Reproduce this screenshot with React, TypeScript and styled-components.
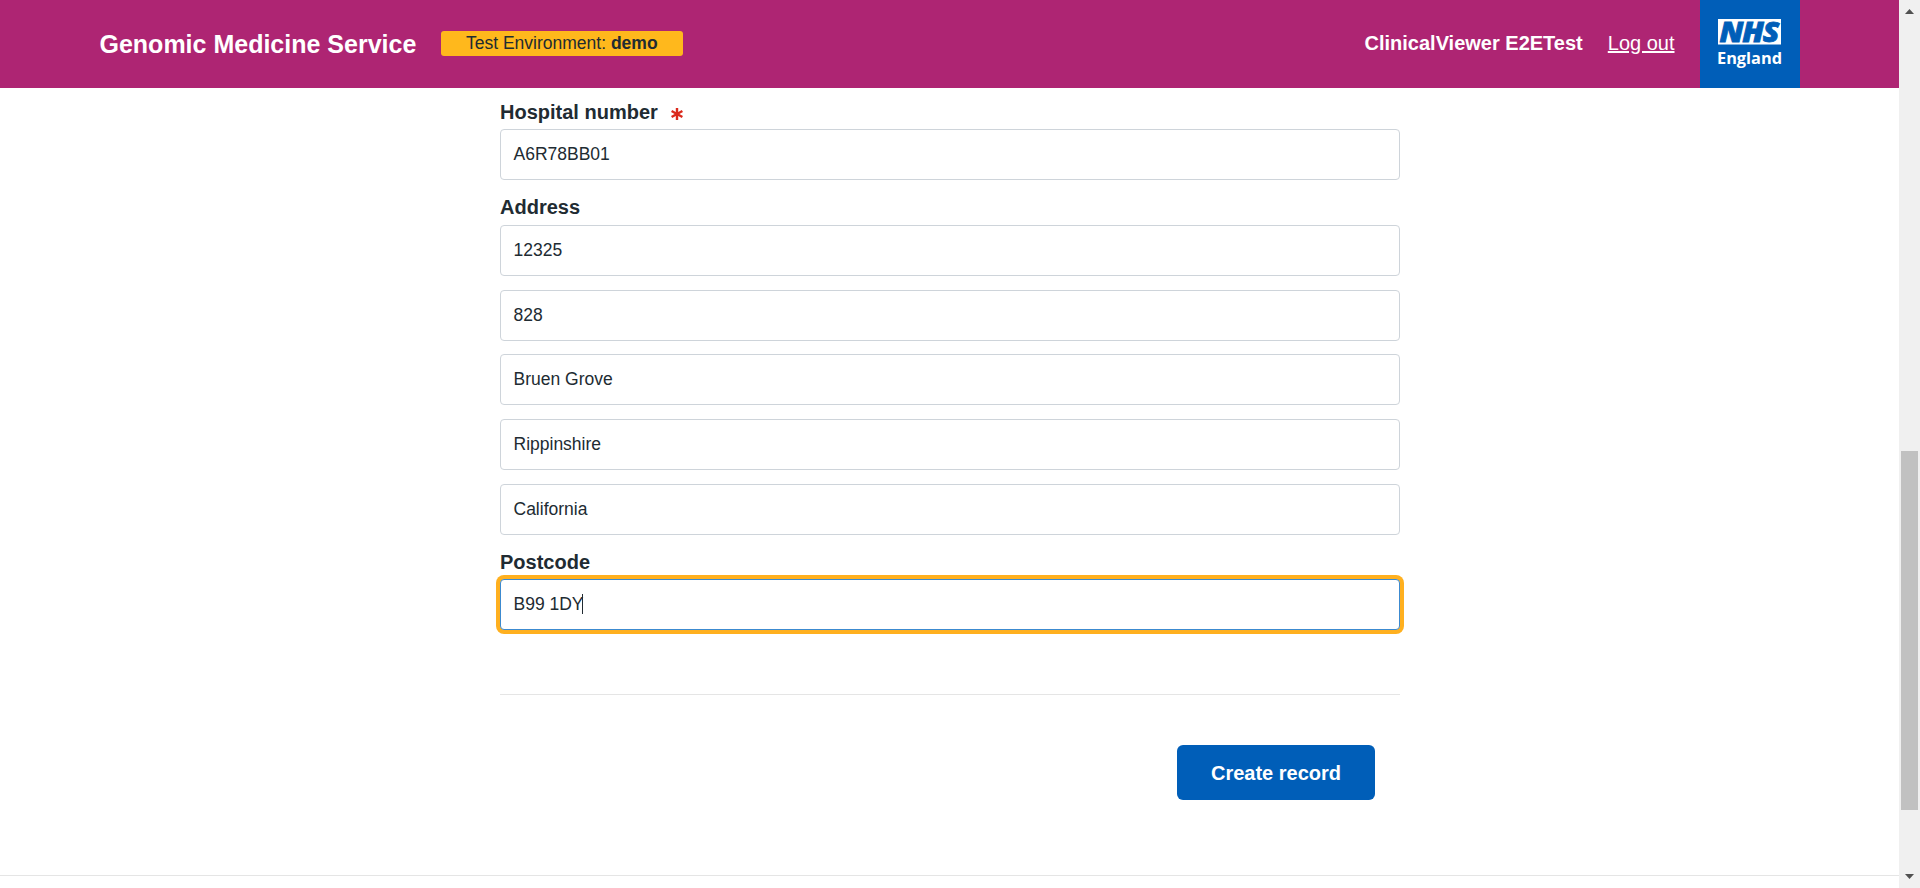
import React from "react";
import styled, { createGlobalStyle, css } from "styled-components";

const Global = createGlobalStyle`
  * { box-sizing: border-box; }
  html, body { margin: 0; padding: 0; overflow: hidden; background: #fff; }
  body { font-family: "Liberation Sans", Arial, sans-serif; color: #212b32; }
`;

const Viewport = styled.div`
  display: flex;
  width: 1920px;
  height: 888px;
  overflow: hidden;
`;

const Page = styled.div`
  flex: 1;
  display: flex;
  flex-direction: column;
  height: 100%;
  background: #fff;
`;

const Header = styled.header`
  display: flex;
  align-items: center;
  height: 88px;
  flex: none;
  padding: 0 99px 0 99.5px;
  background: #ae2573;
  color: #fff;
`;

const Title = styled.h1`
  margin: 0;
  font-size: 25px;
  line-height: 30px;
  font-weight: 700;
  white-space: nowrap;
`;

const EnvBadge = styled.div`
  width: 242px;
  height: 25px;
  margin: 0 0 1px 24.5px;
  border-radius: 3px;
  background: #ffb81c;
  color: #212b32;
  font-size: 17.5px;
  line-height: 24px;
  text-align: center;
  white-space: nowrap;
`;

const UserName = styled.span`
  margin-left: auto;
  font-size: 20px;
  line-height: 30px;
  font-weight: 700;
  white-space: nowrap;
  padding-bottom: 2px;
`;

const LogOut = styled.a`
  margin: 0 25.5px 0 25px;
  font-size: 20px;
  line-height: 30px;
  color: #fff;
  text-decoration: underline;
  text-decoration-thickness: 2px;
  white-space: nowrap;
  padding-bottom: 2px;
`;

const LogoPanel = styled.div`
  width: 100px;
  height: 88px;
  background: #005eb8;
`;

const Form = styled.main`
  width: 900px;
  flex: 1;
  margin-left: 500px;
  display: flex;
  flex-direction: column;
`;

const Group = styled.section<{ $top: number }>`
  display: flex;
  flex-direction: column;
  padding-top: ${(p) => p.$top}px;
`;

const Label = styled.label<{ $gap?: number }>`
  height: 30px;
  margin-bottom: ${(p) => p.$gap ?? 2}px;
  font-size: 20px;
  line-height: 30px;
  font-weight: 700;
`;

const Required = styled.svg`
  width: 12px;
  height: 12px;
  margin-left: 13.5px;
  vertical-align: -1px;
`;

const Fields = styled.div`
  display: flex;
  flex-direction: column;
  gap: 13.7px;
`;

const Field = styled.div<{ $focused?: boolean }>`
  display: flex;
  align-items: center;
  height: 51px;
  padding: 0 12.5px;
  border: 1px solid #ced4da;
  border-radius: 4px;
  background: #fff;
  font-size: 17.5px;
  ${(p) =>
    p.$focused &&
    css`
      border-color: #3c8ad0;
      box-shadow: 0 0 0 4px #ffb01f;
    `}
`;

const Caret = styled.span`
  width: 1px;
  height: 20px;
  margin-left: -2px;
  background: #212b32;
`;

const Divider = styled.hr`
  width: 100%;
  height: 1px;
  margin: 64px 0 50px;
  border: 0;
  background: #e5e5e5;
`;

const SubmitButton = styled.button`
  align-self: flex-end;
  width: 198px;
  height: 55px;
  margin-right: 25px;
  padding: 2px 0 0;
  border: 0;
  border-radius: 6px;
  background: #005eb8;
  color: #fff;
  font: 700 20px "Liberation Sans", Arial, sans-serif;
`;

const Footer = styled.footer`
  height: 13px;
  flex: none;
  border-top: 1px solid #e5e5e5;
`;

const ScrollTrack = styled.div`
  display: flex;
  flex-direction: column;
  align-items: center;
  width: 21px;
  height: 888px;
  background: #f0f0f0;
`;

const ScrollArrow = styled.svg`
  width: 21px;
  height: 21px;
`;

const ScrollThumb = styled.div`
  width: 17px;
  height: 359px;
  margin: 430px 0 57px;
  background: #c1c1c1;
`;

const Logo = () => (
  <svg width="100" height="88" viewBox="0 0 100 88">
    <rect x="18" y="19" width="63" height="25.5" fill="#fff" />
    <text
      transform="translate(19.5 41.5) scale(1.1 1)" letterSpacing="-1"
      fill="#005eb8" stroke="#005eb8" strokeWidth="0.8"
      fontFamily="'Open Sans', sans-serif"
      fontWeight="800" fontStyle="italic" fontSize="27.5"
    >NHS</text>
    <text
      x="17" y="63.5" textLength="65" lengthAdjust="spacingAndGlyphs"
      fill="#fff" fontFamily="'Open Sans', 'Noto Sans', sans-serif"
      fontWeight="700" fontSize="16.5"
    >England</text>
  </svg>
);

const address = ["12325", "828", "Bruen Grove", "Rippinshire", "California"];

export default function App() {
  return (
    <>
      <Global />
      <Viewport>
        <Page>
          <Header>
            <Title>Genomic Medicine Service</Title>
            <EnvBadge>Test Environment: <b>demo</b></EnvBadge>
            <UserName>ClinicalViewer E2ETest</UserName>
            <LogOut>Log out</LogOut>
            <LogoPanel><Logo /></LogoPanel>
          </Header>
          <Form>
            <Group $top={9}>
              <Label>
                Hospital number
                <Required viewBox="0 0 12 12" stroke="#da291c" strokeWidth="2.4">
                  <path d="M6 0v12M.6 3l10.8 6M11.4 3L.6 9" />
                </Required>
              </Label>
              <Field>A6R78BB01</Field>
            </Group>
            <Group $top={12}>
              <Label $gap={3}>Address</Label>
              <Fields>
                {address.map((line) => <Field key={line}>{line}</Field>)}
              </Fields>
            </Group>
            <Group $top={12.2}>
              <Label>Postcode</Label>
              <Field $focused>B99 1DY<Caret /></Field>
            </Group>
            <Divider />
            <SubmitButton>Create record</SubmitButton>
          </Form>
          <Footer />
        </Page>
        <ScrollTrack>
          <ScrollArrow viewBox="0 0 21 21"><path d="M6 14l4.5-5 4.5 5z" fill="#505050" /></ScrollArrow>
          <ScrollThumb />
          <ScrollArrow viewBox="0 0 21 21"><path d="M6 7l4.5 5L15 7z" fill="#505050" /></ScrollArrow>
        </ScrollTrack>
      </Viewport>
    </>
  );
}
